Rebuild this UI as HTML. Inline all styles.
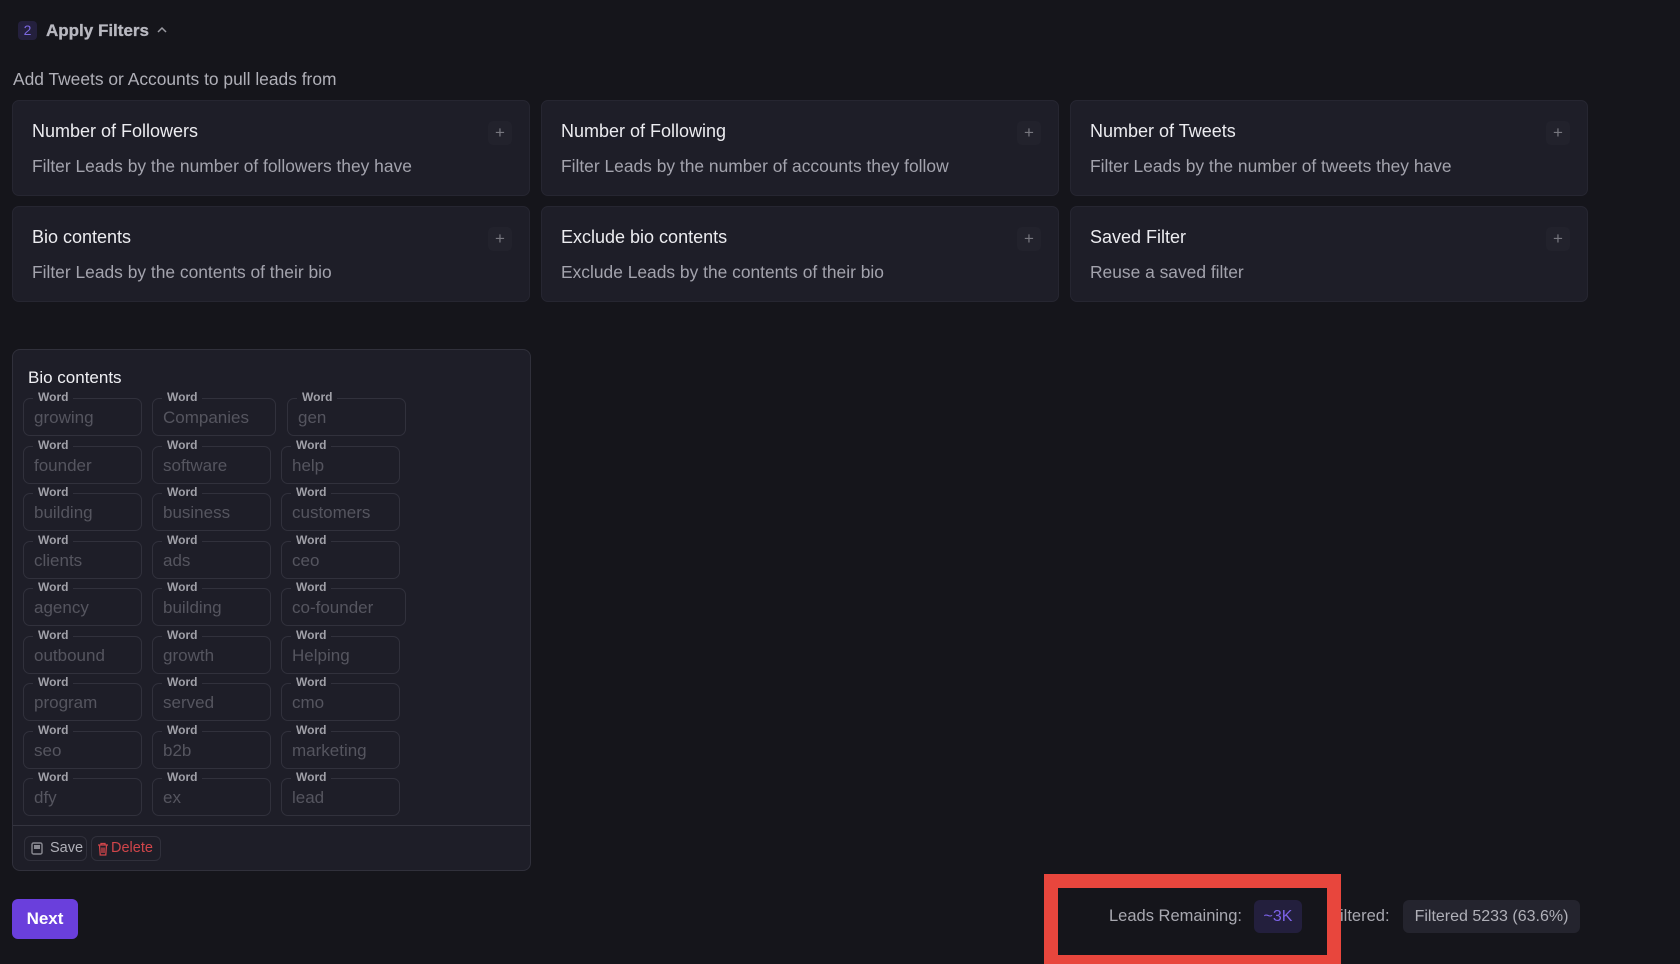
<!DOCTYPE html>
<html><head><meta charset="utf-8"><style>
*{box-sizing:border-box;margin:0;padding:0}
body{width:1680px;height:956px;background:#15151b;font-family:"Liberation Sans",sans-serif;position:relative;overflow:hidden;color:#e6e6ea}
.a{position:absolute}
.card{position:absolute;background:#1e1e28;border:1px solid #262631;border-radius:7px;width:518px;height:96px}
.card .t{position:absolute;left:19px;top:20px;font-size:18px;color:#ececf0}
.card .d{position:absolute;left:19px;top:55px;font-size:17.4px;color:#a3a3ad}
.card .p{position:absolute;left:475px;top:20px;width:24px;height:24px;border-radius:5px;background:#22222c;color:#77777f;font-size:17px;text-align:center;line-height:23px}
.w{position:absolute;height:38px;border:1px solid #31313c;border-radius:7px}
.w span{position:absolute;left:10px;top:9px;font-size:17px;color:#55555f}
.w b{position:absolute;left:9px;top:-9px;font-size:12px;font-weight:bold;color:#a0a0a8;background:#1e1e28;padding:0 5px;line-height:14px}
</style></head><body>
<div class="a" style="left:18px;top:21px;width:19px;height:19px;border-radius:4px;background:#24203d;color:#7b68e0;font-size:14px;text-align:center;line-height:19px">2</div>
<div class="a" style="left:46px;top:21px;font-size:17px;font-weight:600;color:#b8b8c0;-webkit-text-stroke:0.3px #b8b8c0">Apply Filters</div>
<svg class="a" style="left:156px;top:26px" width="12" height="8" viewBox="0 0 12 8"><path d="M2 6L6 2L10 6" stroke="#9a9aa2" stroke-width="1.5" fill="none"/></svg>
<div class="a" style="left:13px;top:69px;font-size:17.4px;color:#b0b0b8">Add Tweets or Accounts to pull leads from</div>

<div class="card" style="left:12px;top:100px"><div class="t">Number of Followers</div><div class="d">Filter Leads by the number of followers they have</div><div class="p">+</div></div>
<div class="card" style="left:541px;top:100px"><div class="t">Number of Following</div><div class="d">Filter Leads by the number of accounts they follow</div><div class="p">+</div></div>
<div class="card" style="left:1070px;top:100px"><div class="t">Number of Tweets</div><div class="d">Filter Leads by the number of tweets they have</div><div class="p">+</div></div>
<div class="card" style="left:12px;top:206px"><div class="t">Bio contents</div><div class="d">Filter Leads by the contents of their bio</div><div class="p">+</div></div>
<div class="card" style="left:541px;top:206px"><div class="t">Exclude bio contents</div><div class="d">Exclude Leads by the contents of their bio</div><div class="p">+</div></div>
<div class="card" style="left:1070px;top:206px"><div class="t">Saved Filter</div><div class="d">Reuse a saved filter</div><div class="p">+</div></div>

<div class="a" style="left:12px;top:349px;width:519px;height:522px;background:#1e1e28;border:1px solid #30303b;border-radius:8px">
<div class="a" style="left:15px;top:18px;font-size:17px;color:#f0f0f4">Bio contents</div>
<div class="a" style="left:0;top:475px;width:517px;height:1px;background:#34343f"></div>
<div class="a" style="left:11px;top:486px;width:63px;height:25px;border:1px solid #30303b;border-radius:6px;font-size:14.5px;color:#b0b0b8;line-height:23px;padding-left:25px">Save
<svg class="a" style="left:6px;top:5px" width="12" height="13" viewBox="0 0 12 13"><rect x="1" y="1" width="10" height="11" rx="1.5" fill="none" stroke="#8a8a92" stroke-width="1.4"/><rect x="3" y="3" width="6" height="4" fill="#8a8a92"/></svg></div>
<div class="a" style="left:78px;top:486px;width:70px;height:25px;border:1px solid #30303b;border-radius:6px;font-size:14.5px;color:#d0454a;line-height:23px;padding-left:19px">Delete
<svg class="a" style="left:5px;top:5px" width="12" height="14" viewBox="0 0 12 14"><path d="M1 3H11M4 3V1.5H8V3M2.5 3L3.2 13H8.8L9.5 3M5 5.5V11M7 5.5V11" stroke="#d0454a" stroke-width="1.3" fill="none"/></svg></div>
</div>

<div id="words"></div>

<div class="a" style="left:12px;top:899px;width:66px;height:40px;border-radius:6px;background:#6a3fdc;color:#fff;font-size:17px;font-weight:bold;text-align:center;line-height:40px">Next</div>

<div class="a" style="left:1044px;top:874px;width:297px;height:90px;border:14px solid #e8463d;border-bottom-width:9px"></div>
<div class="a" style="left:1109px;top:907px;font-size:16.5px;color:#a8a8b0">Leads Remaining:</div>
<div class="a" style="left:1254px;top:900px;width:48px;height:33px;border-radius:6px;background:#231f3d;color:#7c62e8;font-size:16px;text-align:center;line-height:33px">~3K</div>
<div class="a" style="left:1340px;top:907px;font-size:16.5px;color:#a8a8b0">iltered:</div>
<div class="a" style="left:1403px;top:900px;width:177px;height:33px;border-radius:6px;background:#24242e;color:#b0b0b8;font-size:16px;text-align:center;line-height:33px">Filtered 5233 (63.6%)</div>

<script>
var rows=[["growing","Companies","gen"],["founder","software","help"],["building","business","customers"],["clients","ads","ceo"],["agency","building","co-founder"],["outbound","growth","Helping"],["program","served","cmo"],["seo","b2b","marketing"],["dfy","ex","lead"]];
var h="";
rows.forEach(function(r,i){
 var y=398+i*47.5;
 var x2=152,w2=(i==0)?124:119;
 var x3=(i==0)?287:281,w3=(i==4)?125:119;
 [[23,119],[x2,w2],[x3,w3]].forEach(function(c,j){
  h+='<div class="w" style="left:'+c[0]+'px;top:'+y+'px;width:'+c[1]+'px"><b>Word</b><span>'+r[j]+'</span></div>';
 });
});
document.getElementById('words').innerHTML=h;
</script>
</body></html>
